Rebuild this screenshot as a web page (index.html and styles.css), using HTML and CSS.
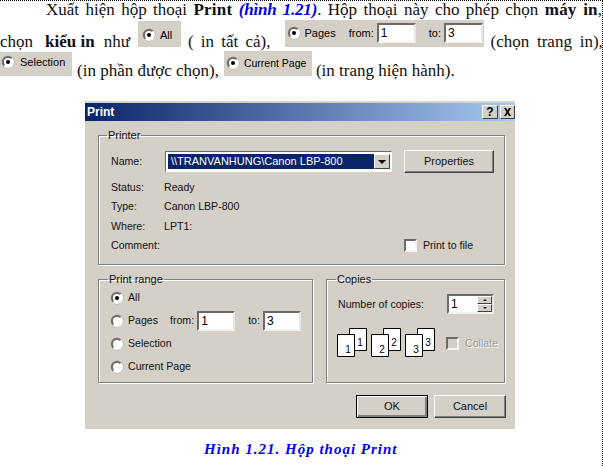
FILE: index.html
```html
<!DOCTYPE html>
<html lang="vi">
<head>
<meta charset="utf-8">
<title>Print</title>
<link rel="stylesheet" href="styles.css">
</head>
<body>
<main class="page">
  <section class="intro">
    <p class="line line-first">Xuất hiện hộp thoại <b>Print</b> <b class="ref"><i>(hình 1.21)</i></b>. Hộp thoại này cho phép chọn <b>máy in</b>,</p>
    <div class="line line-second">
      <span class="w-chon">chọn</span>
      <b class="w-kieu">kiểu in</b>
      <span class="w-nhu">như</span>
      <span class="chip chip-all"><i class="radio on"></i>All</span>
      <span class="w-tat">( in tất cả),</span>
      <span class="chip chip-pages"><i class="radio on"></i>Pages<span class="chip-from">from:</span><span class="field chip-field">1</span><span class="chip-to">to:</span><span class="field chip-field">3</span></span>
      <span class="w-trang">(chọn trang in),</span>
    </div>
    <div class="line line-third">
      <span class="chip chip-sel"><i class="radio on"></i>Selection</span>
      <span class="w-phan">(in phần được chọn),</span>
      <span class="chip chip-cur"><i class="radio on"></i>Current Page</span>
      <span class="w-hien">(in trang hiện hành).</span>
    </div>
  </section>

  <section class="dialog">
    <header class="titlebar">
      <span class="title">Print</span>
      <span class="tbtn tbtn-help">?</span>
      <span class="tbtn tbtn-close">
        <svg width="9" height="8" viewBox="0 0 9 8"><path d="M1 0h2l1.500 2.500L6 0h2L5.500 4 8 8H6L4.500 5.500 3 8H1l2.500-4z" fill="#000"/></svg>
      </span>
    </header>

    <fieldset class="group group-printer">
      <legend>Printer</legend>
      <div class="name-row">
        <span class="lbl">Name:</span>
        <div class="combo">
          <span class="combo-text">\\TRANVANHUNG\Canon LBP-800</span>
          <span class="combo-btn"><i class="arrow"></i></span>
        </div>
        <span class="btn btn-props">Properties</span>
      </div>
      <div class="info-row"><span class="lbl">Status:</span><span>Ready</span></div>
      <div class="info-row"><span class="lbl">Type:</span><span>Canon LBP-800</span></div>
      <div class="info-row"><span class="lbl">Where:</span><span>LPT1:</span></div>
      <div class="info-row info-last">
        <span class="lbl">Comment:</span>
        <label class="check-label"><i class="check"></i>Print to file</label>
      </div>
    </fieldset>

    <div class="lower">
      <fieldset class="group group-range">
        <legend>Print range</legend>
        <div class="radio-row"><i class="radio on"></i>All</div>
        <div class="radio-row"><i class="radio"></i><span class="pages-l">Pages</span><span class="from-l">from:</span><span class="field f-range">1</span><span class="to-l">to:</span><span class="field f-range">3</span></div>
        <div class="radio-row"><i class="radio"></i>Selection</div>
        <div class="radio-row"><i class="radio"></i>Current Page</div>
      </fieldset>

      <fieldset class="group group-copies">
        <legend>Copies</legend>
        <div class="copies-row">
          <span>Number of copies:</span>
          <div class="field spin">
            <span class="spin-val">1</span>
            <span class="spin-btns"><span class="spin-btn"><i class="tri-up"></i></span><span class="spin-btn"><i class="tri-down"></i></span></span>
          </div>
        </div>
        <div class="collate-row">
          <svg class="pages-icon" width="98" height="30" viewBox="0 0 98 30">
            <g class="sheet">
              <path d="M12.500.500h17v22h-17z"/><path d="M.500 6.500h17v22H.500z"/>
              <path d="M46.500.500h17v22h-17z"/><path d="M34.500 6.500h17v22h-17z"/>
              <path d="M80.500.500h17v22h-17z"/><path d="M68.500 6.500h17v22h-17z"/>
            </g>
            <g class="sheet-num">
              <text x="23" y="18">1</text><text x="11" y="25">1</text>
              <text x="57" y="18">2</text><text x="45" y="25">2</text>
              <text x="91" y="18">3</text><text x="79" y="25">3</text>
            </g>
          </svg>
          <label class="check-label disabled"><i class="check"></i>Collate</label>
        </div>
      </fieldset>
    </div>

    <div class="actions">
      <span class="btn btn-ok">OK</span>
      <span class="btn btn-cancel">Cancel</span>
    </div>
  </section>

  <p class="caption">Hình 1.21. Hộp thoại Print</p>
</main>
</body>
</html>
```

FILE: styles.css
```css
* { box-sizing: border-box; }
html, body { margin: 0; padding: 0; background: #fff; }
.page {
  width: 603px; height: 466px; overflow: hidden;
  border-top: 1px dotted #000; border-right: 1px dotted #000;
  font-family: "Liberation Serif", serif; font-size: 17px; color: #111;
}
.intro { height: 100px; }
.line { margin: 0; white-space: nowrap; }
.line-first {
  height: 19px; line-height: 18px; padding: 0 0 0 46px;
  text-align: justify; text-align-last: justify; white-space: normal;
}
.line-first b { letter-spacing: .2px; }
.line-first .ref { letter-spacing: -.2px; }
.ref { color: #0000f0; }
.line-second { display: flex; align-items: flex-end; height: 31px; line-height: 18px; }
.w-kieu { margin-left: 12px; }
.w-nhu { margin-left: 9px; }
.chip-all { margin-left: 8px; }
.w-tat { margin-left: 7px; word-spacing: 3px; }
.chip-pages { margin-left: 14px; }
.w-trang { margin-left: 7px; word-spacing: 3.5px; }
.line-third { display: flex; align-items: flex-end; height: 29px; line-height: 18px; }
.w-phan { margin-left: 5px; }
.chip-cur { margin-left: 5px; }
.w-hien { margin-left: 4px; }

.chip {
  display: inline-flex; align-items: center; background: #d4d0c8; flex: none;
  font-family: "Liberation Sans", sans-serif; font-size: 11px; line-height: 13px; color: #000;
  margin-bottom: 4px;
}
.chip-all { width: 43px; height: 26px; padding: 2px 0 0 5px; gap: 5px; }
.chip-pages { width: 199px; height: 27px; padding: 3px 0 4px 3px; gap: 5px; }
.chip-sel { width: 72px; height: 24px; padding: 0 0 4px 2px; gap: 6px; }
.chip-cur { width: 88px; height: 25px; padding: 0 0 1px 3px; gap: 5px; font-size: 10.500px; }
.chip-from { margin-left: 8px; margin-right: -2px; }
.chip-to { margin-left: 8px; margin-right: -2px; }
.chip-field { width: 39px; height: 20px; font-size: 12px; line-height: 16px; }

.radio {
  display: inline-flex; align-items: center; justify-content: center; flex: none;
  width: 12px; height: 12px; border-radius: 50%; background: #fff;
  border: 2px solid; border-color: #6e6c68 #fff #fff #6e6c68;
  box-shadow: 0 0 0 .5px #aaa;
}
.radio.on::after { content: ""; width: 4px; height: 4px; border-radius: 50%; background: #000; }

.field {
  display: inline-block; background: #fff; color: #000; padding-left: 2px;
  border: 2px solid; border-color: #6c6a66 #e9e7e2 #f4f3f0 #6c6a66;
}

.dialog {
  width: 430px; height: 328px; margin-left: 85px;
  background: #d4d0c8; color: #111; padding-top: 1px;
  border-top: 1px solid #d8d6d0;
  font-family: "Liberation Sans", sans-serif; font-size: 10.600px; line-height: 13px;
  display: flex; flex-direction: column;
}
.titlebar {
  height: 18px; flex: none; display: flex; align-items: center; gap: 2px;
  background: linear-gradient(90deg, #0a246a, #a6caf0);
}
.title { flex: 1; padding-left: 2px; color: #fff; font-weight: bold; font-size: 12px; }
.tbtn {
  width: 16px; height: 14px; flex: none; display: flex; align-items: center; justify-content: center;
  background: #d4d0c8; color: #000; font-weight: bold; font-size: 12px; line-height: 13px;
  border: 1px solid; border-color: #fff #404040 #404040 #fff;
}
.tbtn-close { width: 15px; }

.group {
  margin: 0; padding: 0; min-width: 0;
  border: 1px solid #808080; box-shadow: 1px 1px 0 #fff, inset 1px 1px 0 #fff;
}
.group legend { padding: 0 1px; line-height: 13px; font-size: 11px; }
.group-printer {
  width: 407px; height: 136px; margin: 8px 0 0 13px;
  padding: 8px 10px 0 12px;
}
.group-printer legend { margin-left: -4px; }
.name-row { display: flex; align-items: center; height: 23px; }
.lbl { width: 53px; flex: none; }
.combo {
  width: 227px; height: 21px; margin-left: 1px; display: flex; padding: 2px 1px 2px 2px; background: #fff; flex: none;
  border: 1px solid; border-color: #6c6a66 #fff #fff #6c6a66;
  color: #fff; font-size: 11px; line-height: 15px;
}
.combo-text { flex: 1; background: #0a246a; padding-left: 3px; }
.combo-btn {
  width: 16px; display: flex; align-items: center; justify-content: center; background: #d4d0c8;
  border: 1px solid; border-color: #fff #404040 #404040 #fff;
}
.arrow { width: 0; height: 0; border: 4px solid transparent; border-top: 4px solid #000; border-bottom: 0; }
.btn {
  display: flex; align-items: center; justify-content: center; background: #d4d0c8; color: #111;
  border: 1px solid; border-color: #fff #404040 #404040 #fff;
  box-shadow: inset -1px -1px 0 #808080;
}
.btn-props { width: 90px; height: 23px; margin-left: 12px; font-size: 11px; }
.info-row { display: flex; align-items: center; height: 19.300px; }
.name-row + .info-row { margin-top: 5px; }
.info-last .check-label { margin-left: 240px; }
.check-label { display: flex; align-items: center; gap: 6px; }
.check {
  width: 13px; height: 13px; flex: none; background: #fff;
  border: 2px solid; border-color: #6c6a66 #f4f3f0 #f4f3f0 #6c6a66;
}
.disabled { color: #9c9a94; text-shadow: 1px 1px 0 #fff; }
.disabled .check { background: #d4d0c8; }

.lower { display: flex; gap: 13px; margin: 8px 0 0 13px; }
.group-range { width: 215px; height: 110px; padding: 0 0 0 12px; }
.group-range legend { margin-left: -3px; }
.radio-row { display: flex; align-items: center; height: 23px; gap: 5px; }
.pages-l { width: 37px; }
.from-l { margin-right: -2px; }
.to-l { margin-left: 8px; margin-right: -2px; }
.f-range { width: 38px; height: 20px; font-size: 12px; line-height: 16px; }
.group-copies { width: 179px; height: 110px; padding: 8px 10px 0 11px; }
.group-copies legend { margin-left: -2px; }
.copies-row { display: flex; align-items: center; height: 20px; }
.spin { width: 47px; height: 20px; margin-left: auto; display: flex; padding: 0 0 0 2px; font-size: 12px; line-height: 16px; }
.spin-val { flex: 1; }
.spin-btns { width: 15px; display: flex; flex-direction: column; }
.spin-btn {
  flex: 1; display: flex; align-items: center; justify-content: center; background: #d4d0c8;
  border: 1px solid; border-color: #fff #404040 #404040 #fff;
}
.tri-up { width: 0; height: 0; border: 2px solid transparent; border-bottom: 2px solid #000; border-top: 0; }
.tri-down { width: 0; height: 0; border: 2px solid transparent; border-top: 2px solid #000; border-bottom: 0; }
.collate-row { display: flex; align-items: center; gap: 11px; margin-top: 14px; height: 30px; margin-left: -1px; }
.pages-icon { flex: none; }
.sheet path { fill: #fff; stroke: #000; }
.sheet-num text { font: 10px "Liberation Sans", sans-serif; fill: #000; text-anchor: middle; }

.actions { display: flex; gap: 6px; margin: 12px 0 0 271px; }
.actions .btn { width: 72px; height: 23px; font-size: 11px; }
.btn-ok { border-color: #000; box-shadow: inset 1px 1px 0 #fff, inset -2px -2px 0 #808080; }

.caption {
  margin: 11px 0 0; padding-left: 204px; line-height: 18px; white-space: nowrap;
  font-weight: bold; font-style: italic; font-size: 15px; letter-spacing: 1px; color: #0000f0;
}
```
